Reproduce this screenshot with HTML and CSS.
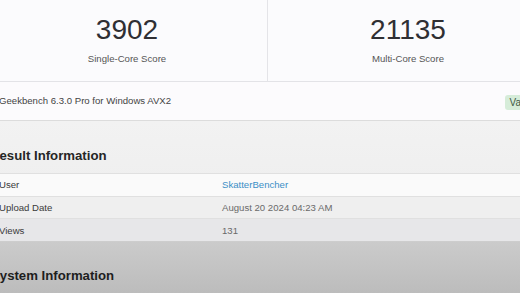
FILE: index.html
```html
<!DOCTYPE html>
<html lang="en">
<head>
  <title>Geekbench 6 Result</title>
  <meta charset="UTF-8">
  <meta name="viewport" content="width=device-width, initial-scale=1.0">
  <link rel="stylesheet" href="styles.css">
</head>
<body>
  <div class="page">
    <div class="scores">
      <div class="score-card">
        <div class="score">3902</div>
        <div class="score-label">Single-Core Score</div>
      </div>
      <div class="score-card">
        <div class="score">21135</div>
        <div class="score-label">Multi-Core Score</div>
      </div>
    </div>
    <div class="version-row">
      <span class="version">Geekbench 6.3.0 Pro for Windows AVX2</span>
      <span class="badge">Valid</span>
    </div>
    <div class="section">
      <h2>Result Information</h2>
      <table class="info-table">
        <tbody>
          <tr class="row-1"><td class="name">User</td><td class="value"><a href="#" class="user-link">SkatterBencher</a></td></tr>
          <tr class="row-2"><td class="name">Upload Date</td><td class="value">August 20 2024 04:23 AM</td></tr>
          <tr class="row-3"><td class="name">Views</td><td class="value">131</td></tr>
        </tbody>
      </table>
    </div>
    <div class="section section-dark">
      <h2>System Information</h2>
    </div>
  </div>
</body>
</html>
```

FILE: styles.css
```css
html, body {
  margin: 0;
  padding: 0;
  overflow: hidden;
}
body {
  font-family: "Liberation Sans", Arial, sans-serif;
  background: #b9b9b9;
  color: #333;
  height: 293px;
}
.page {
  margin-left: -13px;
  width: 561px;
}
.scores {
  display: flex;
  height: 81px;
  background: #fbfbfd;
  border-bottom: 1px solid #e4e4e8;
}
.score-card {
  flex: 1;
  display: flex;
  flex-direction: column;
  align-items: center;
  padding-top: 14px;
}
.score-card + .score-card {
  border-left: 1px solid #e4e4e8;
}
.score {
  font-size: 28px;
  line-height: 32px;
  color: #2f2f33;
}
.score-label {
  margin-top: 7px;
  font-size: 9.6px;
  color: #555;
}
.version-row {
  display: flex;
  align-items: center;
  justify-content: space-between;
  height: 38px;
  padding: 0 0 0 12px;
  background: #fcfbfd;
  border-bottom: 1px solid #dcdcdc;
  box-shadow: 0 1px 2px rgba(0,0,0,0.06);
}
.version {
  font-size: 9.6px;
  color: #444;
  margin-top: -2px;
}
.badge {
  margin-right: 12px;
  margin-top: 2px;
  background: #d6ecd9;
  color: #3d5a45;
  font-size: 10px;
  padding: 2px 5px;
  border-radius: 3px;
}
.section {
  background: linear-gradient(#f2f2f2, #ececec);
  padding: 26px 0 0 0;
}
.section h2 {
  margin: 0 0 9px 3px;
  font-size: 13.2px;
  line-height: 17px;
  font-weight: 700;
  color: #262626;
}
.info-table {
  width: 100%;
  border-collapse: collapse;
  font-size: 9.6px;
}
.info-table td {
  height: 21.7px;
  padding: 0;
  border-top: 1px solid #e0e0e0;
}
.info-table tr:last-child td {
  border-bottom: 1px solid #cdcdcd;
}
.info-table .name {
  width: 223px;
  padding-left: 12px;
  color: #3a3a3a;
}
.info-table .value {
  color: #6a6a6a;
}
.row-1 { background: #fafafa; }
.row-2 { background: #efefef; }
.row-3 { background: #e7e7e9; }
.user-link {
  color: #3a8fc6;
  text-decoration: none;
}
.section-dark {
  background: linear-gradient(#cbcbcb, #b2b2b2);
  height: 60px;
  padding-top: 25px;
}
.section-dark h2 {
  color: #1e1e1e;
  margin-left: 4px;
}
```
